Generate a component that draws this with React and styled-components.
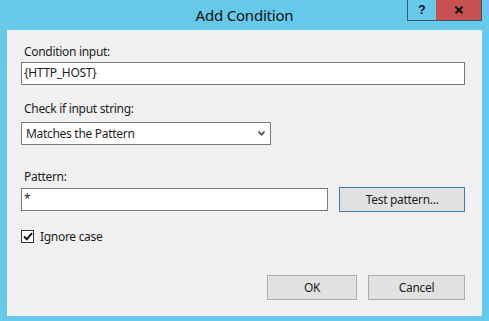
import React from 'react';
import styled, { createGlobalStyle } from 'styled-components';

const Global = createGlobalStyle`
  html, body { margin: 0; padding: 0; }
  body { font-family: "Noto Sans", "Open Sans", sans-serif; }
  * { box-sizing: border-box; }
`;

const Frame = styled.div`
  width: 489px;
  height: 321px;
  background: #67c9ea;
  padding: 0 7px 5px;
  display: flex;
  flex-direction: column;
`;

const TitleBar = styled.div`
  height: 30px;
  display: grid;
  grid-template-columns: 1fr auto 1fr;
  align-items: start;
`;

const Title = styled.div`
  grid-column: 2;
  font-size: 15px;
  line-height: 30px;
  color: #111;
  letter-spacing: -0.2px;
`;

const Caption = styled.div`
  grid-column: 3;
  justify-self: end;
  display: flex;
  border: 1px solid #3b566a;
  border-top: none;
`;

const CaptionButton = styled.div`
  width: ${p => p.$w}px;
  height: 20px;
  display: flex;
  align-items: center;
  justify-content: center;
  background: ${p => (p.$close ? '#c75050' : '#67c9ea')};
  font-family: "Liberation Sans", Arial, sans-serif;
  font-weight: bold;
  font-size: 12px;
  color: #111;
`;

const Client = styled.div`
  flex: 1;
  background: #f0f0f0;
  padding: 14px 17px 0 14px;
  display: flex;
  flex-direction: column;
  font-size: 12px;
  letter-spacing: -0.3px;
  color: #1e1e1e;
`;

const Label = styled.div`
  line-height: 16px;
  margin-top: ${p => p.$top || 0}px;
  margin-bottom: ${p => p.$gap || 2}px;
  padding-left: 3px;
`;

const TextBox = styled.div`
  width: ${p => p.$w}px;
  height: 23px;
  background: #fff;
  border: 1px solid #7a7a7a;
  padding: 0 2px;
  line-height: 20px;
  white-space: nowrap;
`;

const Select = styled(TextBox)`
  display: flex;
  align-items: center;
  justify-content: space-between;
  padding: 0 5px 0 4px;
`;

const Row = styled.div`
  display: flex;
  align-items: center;
  gap: ${p => p.$gap || 0}px;
  margin-top: ${p => p.$top || 0}px;
`;

const Button = styled.div`
  width: ${p => p.$w}px;
  height: 25px;
  background: #e1e1e1;
  border: 1px solid ${p => (p.$focus ? '#3c7fb1' : '#adadad')};
  display: flex;
  align-items: center;
  justify-content: center;
  color: #1e1e1e;
`;

const Check = styled.div`
  width: 13px;
  height: 13px;
  border: 1px solid #333;
  background: #fff;
  display: flex;
  align-items: center;
  justify-content: center;
`;

const Footer = styled.div`
  display: flex;
  justify-content: flex-end;
  gap: 11px;
  margin-top: 30px;
`;

export default function App() {
  return (
    <>
      <Global />
      <Frame>
        <TitleBar>
          <Title>Add Condition</Title>
          <Caption>
            <CaptionButton $w={28}>?</CaptionButton>
            <CaptionButton $w={45} $close>
              <svg width="10" height="8" viewBox="0 0 10 8">
                <path d="M1.5 0.8 L8.5 7.2 M8.5 0.8 L1.5 7.2" stroke="#111" strokeWidth="2.2" />
              </svg>
            </CaptionButton>
          </Caption>
        </TitleBar>
        <Client>
          <Label>Condition input:</Label>
          <TextBox $w={444}>{'{HTTP_HOST}'}</TextBox>
          <Label $top={16} $gap={5}>Check if input string:</Label>
          <Select $w={250}>
            <span>Matches the Pattern</span>
            <svg width="7" height="5" viewBox="0 0 7 5">
              <path d="M0.5 0.5 L3.5 3.8 L6.5 0.5" stroke="#444" strokeWidth="1.6" fill="none" />
            </svg>
          </Select>
          <Label $top={24} $gap={2}>Pattern:</Label>
          <Row $gap={11}>
            <TextBox $w={308}>*</TextBox>
            <Button $w={126} $focus>Test pattern...</Button>
          </Row>
          <Row $gap={6} $top={16}>
            <Check>
              <svg width="10" height="9" viewBox="0 0 10 9">
                <path d="M1 4.5 L3.8 7.3 L9 1.2" stroke="#111" strokeWidth="2" fill="none" />
              </svg>
            </Check>
            <span>Ignore case</span>
          </Row>
          <Footer>
            <Button $w={90}>OK</Button>
            <Button $w={97}>Cancel</Button>
          </Footer>
        </Client>
      </Frame>
    </>
  );
}
